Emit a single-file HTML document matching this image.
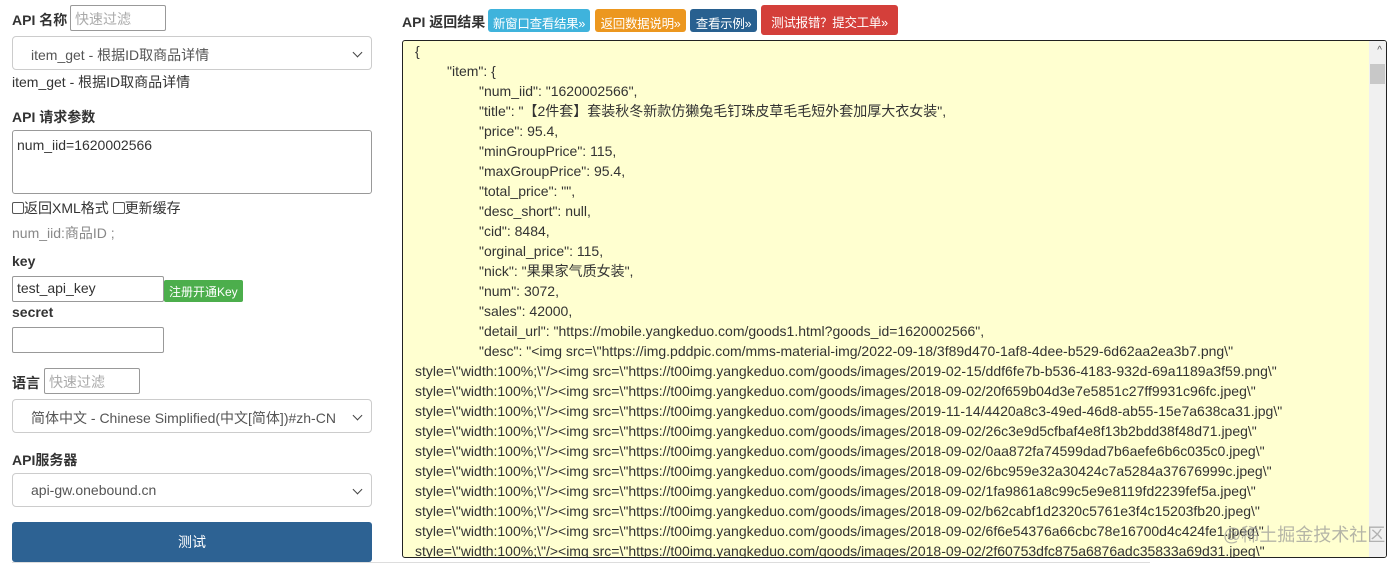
<!DOCTYPE html>
<html><head><meta charset="utf-8"><style>
*{box-sizing:border-box;margin:0;padding:0}
body{width:1399px;height:565px;background:#fff;font-family:"Liberation Sans","Noto Sans CJK SC",sans-serif;font-size:14px;color:#333;position:relative;overflow:hidden}
.a{position:absolute;white-space:nowrap}
.b{font-weight:bold}
.inp{position:absolute;border:1px solid #999;background:#fff;border-radius:2px;font-size:14px;padding:3px 4px;color:#aaa}
.sel{position:absolute;border:1px solid #ccc;border-radius:4px;background:#fff;height:34px;padding:8px 18px;color:#555;font-size:14px}
.sel:after{content:"";position:absolute;right:10px;top:12px;width:6px;height:6px;border-right:1.5px solid #444;border-bottom:1.5px solid #444;transform:rotate(45deg)}
.btn{position:absolute;color:#fff;font-size:12.5px;padding:4px 0;border-radius:3px;text-align:center;white-space:nowrap;letter-spacing:-0.3px}
.res{position:absolute;left:402px;top:40px;width:985px;height:518px;border:1px solid #222;border-radius:3px;background:#ffffd0;overflow:hidden}
.res div{position:absolute;white-space:nowrap;font-size:14px;color:#333;line-height:20px}
.cb{display:inline-block;width:12px;height:12px;border:1px solid #555;vertical-align:-1px;border-radius:2px}
</style></head><body>
<div class="a b" style="left:12px;top:10px">API 名称</div>
<div class="inp" style="left:70px;top:5px;width:96px;height:26px">快速过滤</div>
<div class="sel" style="left:12px;top:36px;width:360px">item_get - 根据ID取商品详情</div>
<div class="a" style="left:12px;top:72px">item_get - 根据ID取商品详情</div>
<div class="a b" style="left:12px;top:107px">API 请求参数</div>
<div style="position:absolute;left:12px;top:130px;width:360px;height:64px;border:1px solid #999;border-radius:3px;padding:6px 4px;font-size:14px">num_iid=1620002566</div>
<div class="a" style="left:12px;top:198px"><span class="cb"></span>返回XML格式 <span class="cb"></span>更新缓存</div>
<div class="a" style="left:12px;top:223px;color:#888">num_iid:商品ID ;</div>
<div class="a b" style="left:12px;top:253px">key</div>
<div class="inp" style="left:12px;top:276px;width:152px;height:26px;color:#333">test_api_key</div>
<div class="a" style="left:164px;top:280px;background:#4cae4c;color:#fff;font-size:12px;padding:3px 5px;border-radius:2px;height:22px">注册开通Key</div>
<div class="a b" style="left:12px;top:304px">secret</div>
<div class="inp" style="left:12px;top:327px;width:152px;height:26px"></div>
<div class="a b" style="left:12px;top:373px">语言</div>
<div class="inp" style="left:44px;top:368px;width:96px;height:26px">快速过滤</div>
<div class="sel" style="left:12px;top:399px;width:360px">简体中文 - Chinese Simplified(中文[简体])#zh-CN</div>
<div class="a b" style="left:12px;top:450px">API服务器</div>
<div class="sel" style="left:12px;top:473px;width:360px">api-gw.onebound.cn</div>
<div class="a" style="left:12px;top:522px;width:360px;height:40px;background:#2d6293;border-radius:3px;color:#fff;text-align:center;line-height:40px">测试</div>
<div class="a" style="left:12px;top:562px;width:1138px;height:1px;background:#ddd"></div>

<div class="a b" style="left:402px;top:12px">API 返回结果</div>
<div class="btn" style="left:488px;top:9px;width:102px;height:23px;background:#3fb3dc">新窗口查看结果»</div>
<div class="btn" style="left:595px;top:9px;width:91px;height:23px;background:#ec971f">返回数据说明»</div>
<div class="btn" style="left:690px;top:9px;width:67px;height:23px;background:#286090">查看示例»</div>
<div class="btn" style="left:761px;top:5px;width:137px;height:30px;padding:7px 0;background:#d43f3a">测试报错？提交工单»</div>

<div class="res">
<div style="left:12px;top:0">{</div>
<div style="left:44px;top:20px">"item": {</div>
<div style="left:76px;top:40px">"num_iid": "1620002566",</div>
<div style="left:76px;top:60px">"title": "【2件套】套装秋冬新款仿獭兔毛钉珠皮草毛毛短外套加厚大衣女装",</div>
<div style="left:76px;top:80px">"price": 95.4,</div>
<div style="left:76px;top:100px">"minGroupPrice": 115,</div>
<div style="left:76px;top:120px">"maxGroupPrice": 95.4,</div>
<div style="left:76px;top:140px">"total_price": "",</div>
<div style="left:76px;top:160px">"desc_short": null,</div>
<div style="left:76px;top:180px">"cid": 8484,</div>
<div style="left:76px;top:200px">"orginal_price": 115,</div>
<div style="left:76px;top:220px">"nick": "果果家气质女装",</div>
<div style="left:76px;top:240px">"num": 3072,</div>
<div style="left:76px;top:260px">"sales": 42000,</div>
<div style="left:76px;top:280px">"detail_url": "https://mobile.yangkeduo.com/goods1.html?goods_id=1620002566",</div>
<div style="left:76px;top:300px">"desc": "&lt;img src=\"https://img.pddpic.com/mms-material-img/2022-09-18/3f89d470-1af8-4dee-b529-6d62aa2ea3b7.png\"</div>
<div style="left:12px;top:320px">style=\"width:100%;\"/&gt;&lt;img src=\"https://t00img.yangkeduo.com/goods/images/2019-02-15/ddf6fe7b-b536-4183-932d-69a1189a3f59.png\"</div>
<div style="left:12px;top:340px">style=\"width:100%;\"/&gt;&lt;img src=\"https://t00img.yangkeduo.com/goods/images/2018-09-02/20f659b04d3e7e5851c27ff9931c96fc.jpeg\"</div>
<div style="left:12px;top:360px">style=\"width:100%;\"/&gt;&lt;img src=\"https://t00img.yangkeduo.com/goods/images/2019-11-14/4420a8c3-49ed-46d8-ab55-15e7a638ca31.jpg\"</div>
<div style="left:12px;top:380px">style=\"width:100%;\"/&gt;&lt;img src=\"https://t00img.yangkeduo.com/goods/images/2018-09-02/26c3e9d5cfbaf4e8f13b2bdd38f48d71.jpeg\"</div>
<div style="left:12px;top:400px">style=\"width:100%;\"/&gt;&lt;img src=\"https://t00img.yangkeduo.com/goods/images/2018-09-02/0aa872fa74599dad7b6aefe6b6c035c0.jpeg\"</div>
<div style="left:12px;top:420px">style=\"width:100%;\"/&gt;&lt;img src=\"https://t00img.yangkeduo.com/goods/images/2018-09-02/6bc959e32a30424c7a5284a37676999c.jpeg\"</div>
<div style="left:12px;top:440px">style=\"width:100%;\"/&gt;&lt;img src=\"https://t00img.yangkeduo.com/goods/images/2018-09-02/1fa9861a8c99c5e9e8119fd2239fef5a.jpeg\"</div>
<div style="left:12px;top:460px">style=\"width:100%;\"/&gt;&lt;img src=\"https://t00img.yangkeduo.com/goods/images/2018-09-02/b62cabf1d2320c5761e3f4c15203fb20.jpeg\"</div>
<div style="left:12px;top:480px">style=\"width:100%;\"/&gt;&lt;img src=\"https://t00img.yangkeduo.com/goods/images/2018-09-02/6f6e54376a66cbc78e16700d4c424fe1.jpeg\"</div>
<div style="left:12px;top:500px">style=\"width:100%;\"/&gt;&lt;img src=\"https://t00img.yangkeduo.com/goods/images/2018-09-02/2f60753dfc875a6876adc35833a69d31.jpeg\"</div>
<div style="right:0;top:0;width:17px;height:516px;background:#f0f0f0"></div>
<div style="right:1px;top:23px;width:15px;height:20px;background:#c8c8c8"></div>
<div style="right:4px;top:0;font-size:10px;color:#555">^</div>
<div style="left:820px;top:484px;font-size:18px;color:rgba(150,150,150,.7)">@稀土掘金技术社区</div>
</div>
</body></html>
